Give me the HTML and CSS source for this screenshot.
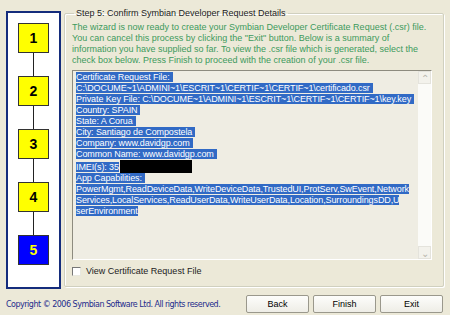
FILE: index.html
```html
<!DOCTYPE html>
<html lang="en">
<head>
  <meta charset="UTF-8">
  <title>Symbian Developer Certificate Request</title>
  <link rel="stylesheet" href="styles.css">
</head>
<body>
  <div class="main">
    <div class="steps">
      <div class="step">1</div>
      <div class="link"></div>
      <div class="step">2</div>
      <div class="link"></div>
      <div class="step">3</div>
      <div class="link"></div>
      <div class="step">4</div>
      <div class="link"></div>
      <div class="step current">5</div>
    </div>

    <fieldset class="group">
      <legend>Step 5: Confirm Symbian Developer Request Details</legend>
      <p class="intro">The wizard is now ready to create your Symbian Developer Certificate Request (.csr) file. You can cancel this process by clicking the "Exit" button. Below is a summary of information you have supplied so far. To view the .csr file which is generated, select the check box below. Press Finish to proceed with the creation of your .csr file.</p>

      <div class="summary">
        <div class="lines">
          <div><span class="sel nl">Certificate Request File:</span></div>
          <div><span class="sel nl">C:\DOCUME~1\ADMINI~1\ESCRIT~1\CERTIF~1\CERTIF~1\certificado.csr</span></div>
          <div><span class="sel nl">Private Key File: C:\DOCUME~1\ADMINI~1\ESCRIT~1\CERTIF~1\CERTIF~1\key.key</span></div>
          <div><span class="sel nl">Country: SPAIN</span></div>
          <div><span class="sel nl">State: A Corua</span></div>
          <div><span class="sel nl">City: Santiago de Compostela</span></div>
          <div><span class="sel nl">Company: www.davidgp.com</span></div>
          <div><span class="sel nl">Common Name: www.davidgp.com</span></div>
          <div><span class="sel">IMEI(s): 35</span><span class="redact"></span></div>
          <div><span class="sel nl">App Capabilities:</span></div>
          <div><span class="sel">PowerMgmt,ReadDeviceData,WriteDeviceData,TrustedUI,ProtServ,SwEvent,Network</span></div>
          <div><span class="sel">Services,LocalServices,ReadUserData,WriteUserData,Location,SurroundingsDD,U</span></div>
          <div><span class="sel">serEnvironment</span></div>
        </div>
        <div class="scrollbar">
          <div class="arrow">&#8963;</div>
          <div class="track"></div>
          <div class="arrow">&#8964;</div>
        </div>
      </div>

      <label class="check"><span class="box"></span>View Certificate Request File</label>
    </fieldset>
  </div>

  <div class="footer">
    <div class="copyright">Copyright &copy; 2006 Symbian Software Ltd. All rights reserved.</div>
    <div class="buttons">
      <button class="btn">Back</button>
      <button class="btn">Finish</button>
      <button class="btn">Exit</button>
    </div>
  </div>
</body>
</html>
```

FILE: styles.css
```css
body {
  margin: 0;
  width: 450px;
  height: 315px;
  background: #ece9d8;
  font-family: "Liberation Sans", Arial, sans-serif;
  font-size: 9px;
  color: #000;
  overflow: hidden;
}

.main {
  display: flex;
  align-items: flex-start;
  padding: 11px 0 0 6px;
  height: 276px;
}

.steps {
  width: 51px;
  height: 264px;
  border: 2px solid #142c7c;
  background: #fff;
  display: flex;
  flex-direction: column;
  align-items: center;
  padding-top: 10px;
}

.step {
  width: 29px;
  height: 28px;
  border: 1px solid #333;
  background: #ffff00;
  font: bold 14px "Liberation Sans", Arial, sans-serif;
  line-height: 28px;
  text-align: center;
}

.step.current {
  background: #0000ff;
  color: #ffff00;
}

.link {
  width: 1px;
  height: 23px;
  background: #222;
}

.group {
  margin: -3px 0 0 3px;
  padding: 3px 11px 0 7px;
  width: 360px;
  height: 274px;
  border: 1px solid #d0d0bf;
  box-shadow: inset 1px 1px #fff, 1px 1px #fff;
  border-radius: 2px;
}

.group legend {
  padding: 0 2px;
  margin-left: 2px;
  color: #222;
  line-height: 11px;
}

.intro {
  margin: 0 0 4px;
  color: #3c9a5c;
  line-height: 11px;
}

.summary {
  display: flex;
  height: 188px;
  border: 1px solid #8d8b7f;
  border-right-color: #fff;
  border-bottom-color: #fff;
  background: #efede3;
}

.lines {
  flex: 1;
  padding: 1px 0 0 3px;
  line-height: 11px;
  letter-spacing: -0.1px;
  white-space: nowrap;
  overflow: hidden;
}

.sel {
  background: #316ac5;
  color: #fff;
}

.sel.nl {
  padding-right: 3px;
}

.redact {
  display: inline-block;
  width: 72px;
  height: 13px;
  background: #000;
  vertical-align: -3px;
  margin-left: 1px;
}

.scrollbar {
  width: 13px;
  display: flex;
  flex-direction: column;
  background: #fbfbf8;
}

.arrow {
  height: 13px;
  border: 1px solid #e4e3dc;
  box-sizing: border-box;
  background: #f3f2ec;
  color: #b8b7ae;
  font-size: 10px;
  line-height: 13px;
  text-align: center;
}

.track {
  flex: 1;
}

.check {
  display: flex;
  align-items: center;
  margin-top: 6px;
  color: #222;
}

.box {
  width: 7px;
  height: 7px;
  border: 1px solid #777;
  border-right-color: #e8e8e0;
  border-bottom-color: #e8e8e0;
  background: #fff;
  margin-right: 5px;
}

.footer {
  display: flex;
  align-items: center;
  justify-content: space-between;
  padding: 8px 7px 0 6px;
}

.copyright {
  color: #1e2c8c;
  font-family: "DejaVu Sans", sans-serif;
  font-size: 8px;
  letter-spacing: -0.5px;
}

.buttons {
  display: flex;
  gap: 4px;
}

.btn {
  width: 63px;
  height: 18px;
  padding: 0;
  font: 9px "Liberation Sans", Arial, sans-serif;
  color: #000;
  border: 1px solid #9a988c;
  border-radius: 2px;
  background: linear-gradient(#fdfdfb, #eeede6);
}
```
